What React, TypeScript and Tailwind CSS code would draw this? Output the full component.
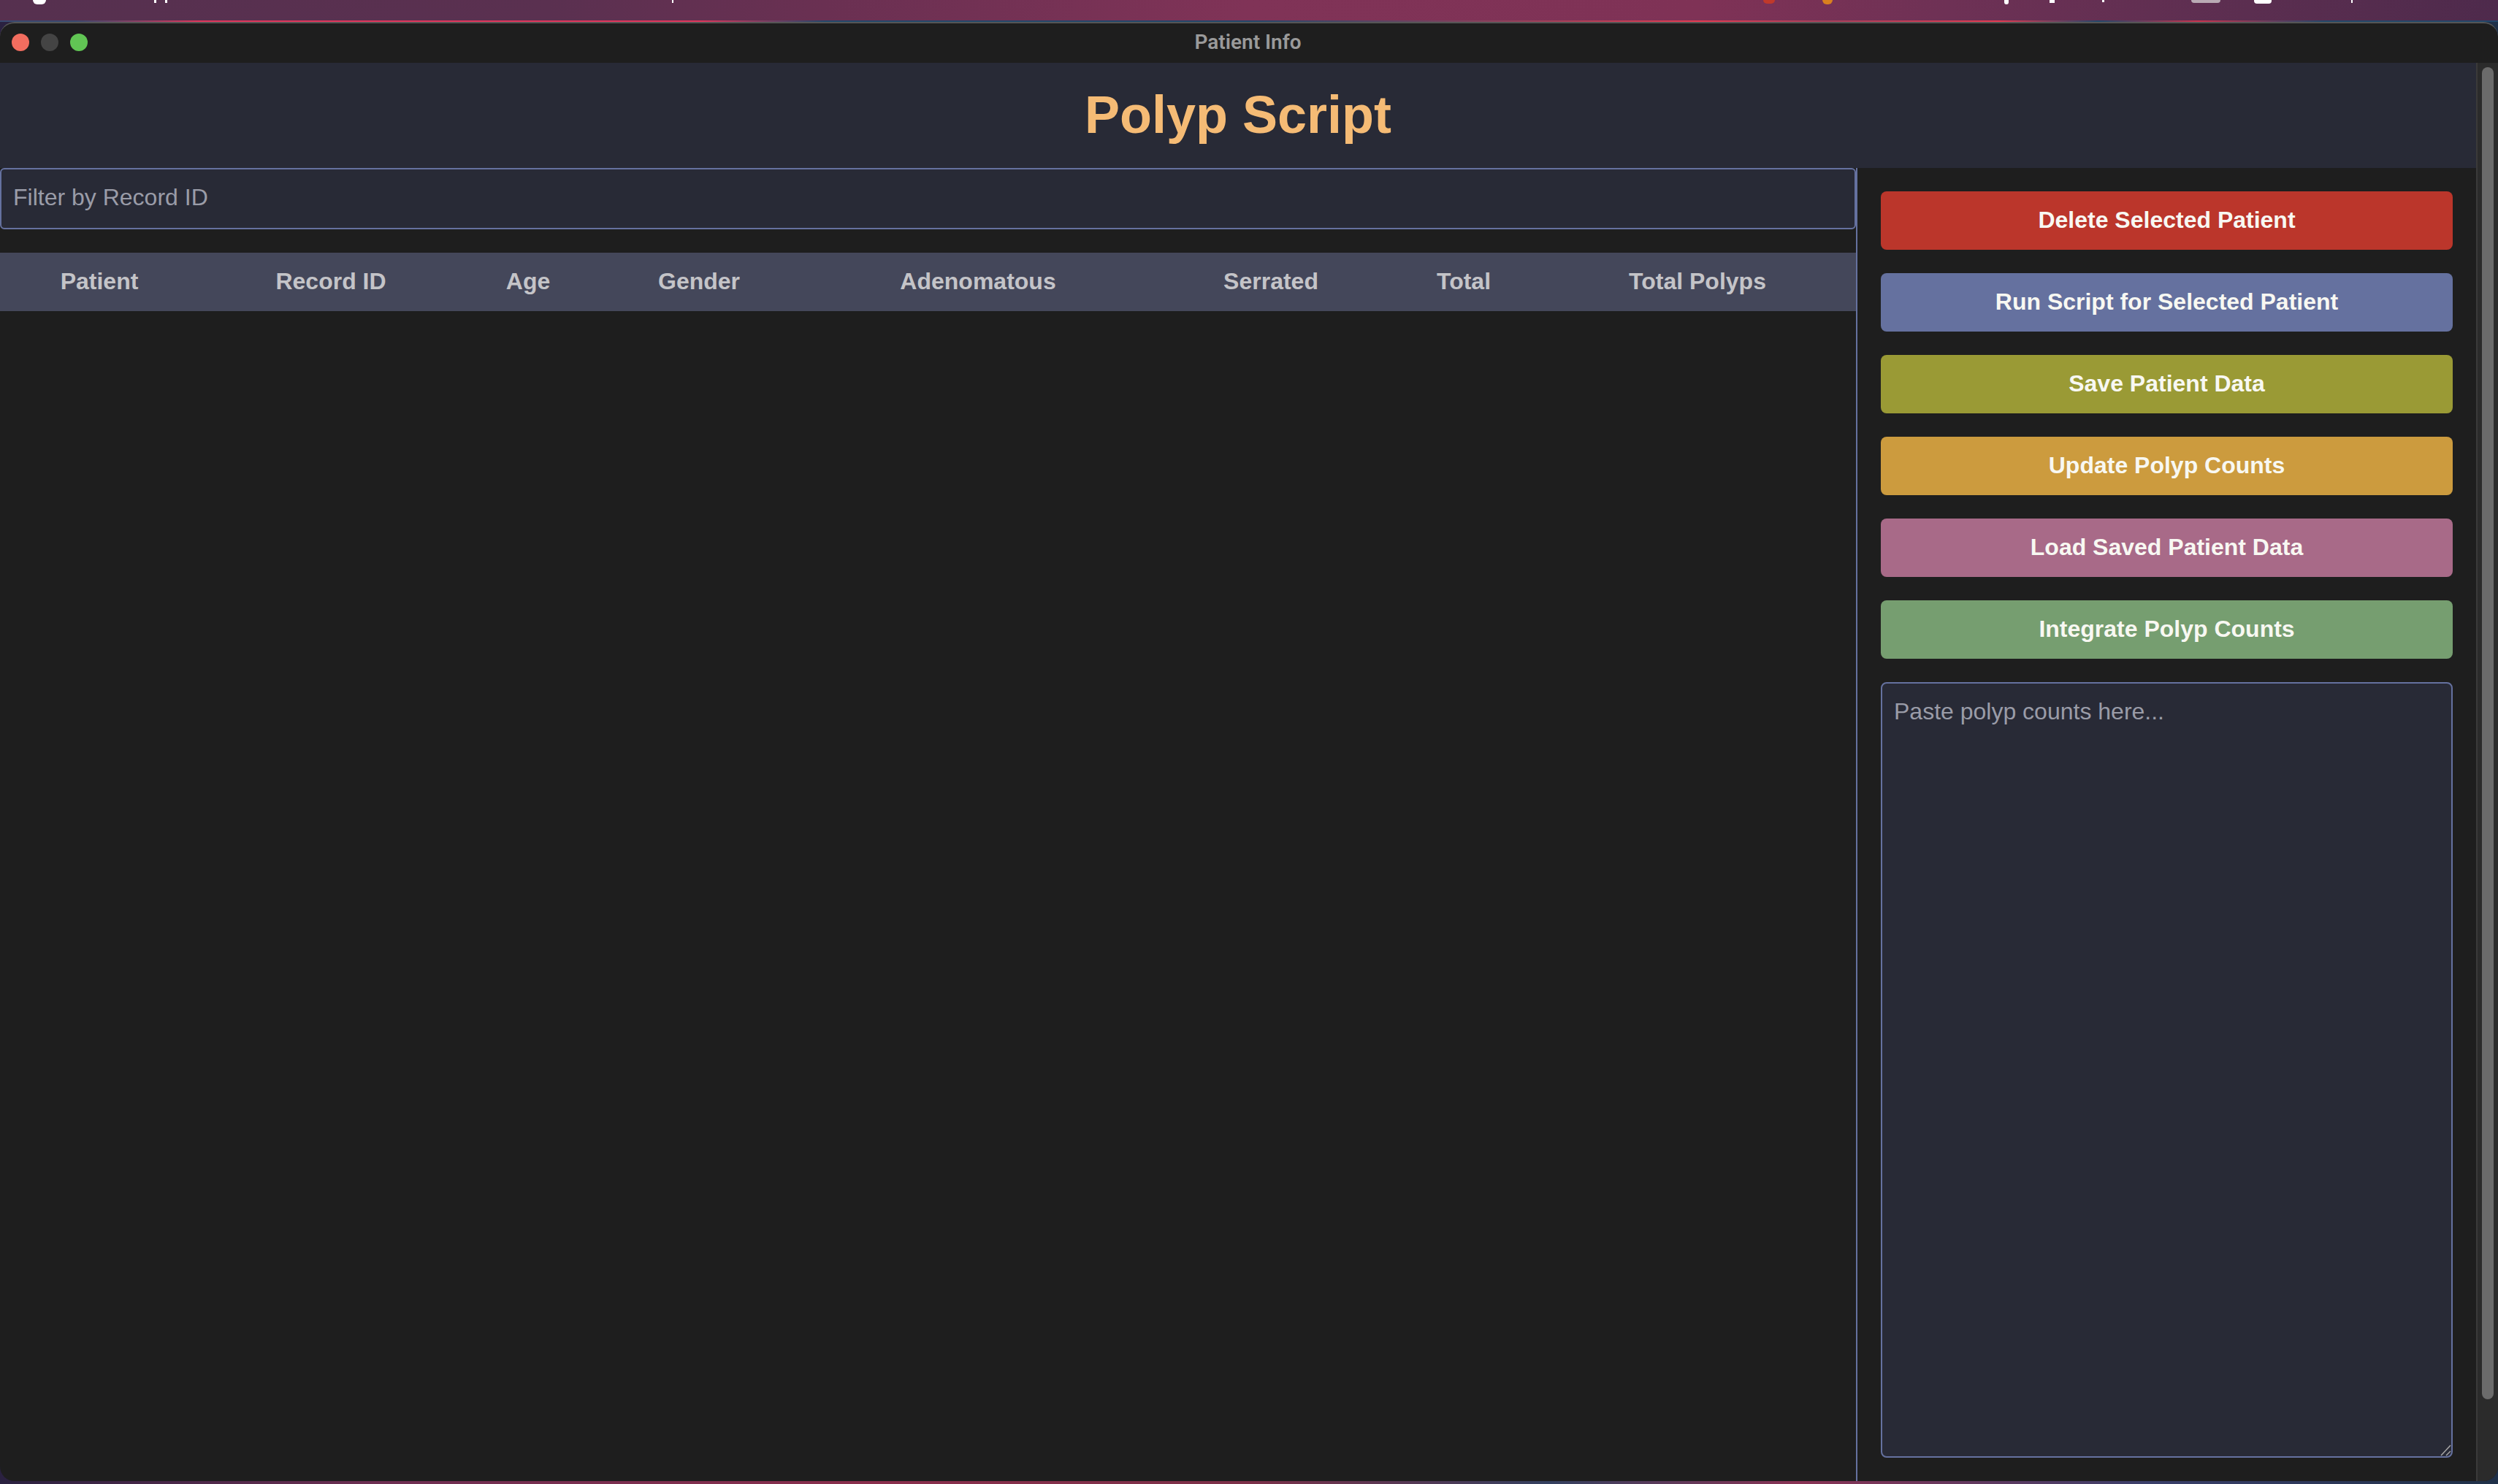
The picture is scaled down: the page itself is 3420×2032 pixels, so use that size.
import React from 'react';

const columns = [
    { label: 'Patient', width: 'w-[272px]' },
    { label: 'Record ID', width: 'w-[362px]' },
    { label: 'Age', width: 'w-[178px]' },
    { label: 'Gender', width: 'w-[290px]' },
    { label: 'Adenomatous', width: 'w-[474px]' },
    { label: 'Serrated', width: 'w-[328px]' },
    { label: 'Total', width: 'w-[200px]' },
    { label: 'Total Polyps', width: 'w-[437px] pl-[3px]' },
];

const actions = [
    { label: 'Delete Selected Patient', color: 'bg-[#bb362b]' },
    { label: 'Run Script for Selected Patient', color: 'bg-[#65719f]' },
    { label: 'Save Patient Data', color: 'bg-[#9a9a35]' },
    { label: 'Update Polyp Counts', color: 'bg-[#cc9b3e]' },
    { label: 'Load Saved Patient Data', color: 'bg-[#a86a88]' },
    { label: 'Integrate Polyp Counts', color: 'bg-[#769e70]' },
];

// bits of the macOS menu bar that stick out above the crop
const menuBits = [
    'left-[45px] w-[18px] h-[6px] rounded-b-full bg-white',
    'left-[211px] w-[3px] h-[4px] bg-white',
    'left-[226px] w-[3px] h-[4px] bg-white',
    'left-[920px] w-[2px] h-[4px] bg-white',
    'left-[2414px] w-[16px] h-[5px] rounded-b-full bg-[#c0392b]',
    'left-[2495px] w-[14px] h-[6px] rounded-b-full bg-[#d9801f]',
    'left-[2744px] w-[6px] h-[6px] rounded-b-full bg-white',
    'left-[2806px] w-[7px] h-[4px] bg-white',
    'left-[2878px] w-[3px] h-[3px] bg-white',
    'left-[3000px] w-[40px] h-[4px] rounded-b bg-[#b9aab4]',
    'left-[3086px] w-[24px] h-[5px] rounded-b bg-white',
    'left-[3219px] w-[2px] h-[4px] bg-white',
];

const App: React.FC = () => {
    return (
        <div className="relative flex flex-col w-[3420px] h-[2032px] overflow-hidden font-['Liberation_Sans',Arial,sans-serif] bg-[linear-gradient(90deg,#2a2140_0%,#6d2f52_15%,#8a2f4c_35%,#7c3048_50%,#33405f_62%,#8a3354_72%,#3a3f6a_86%,#1f3048_100%)]">
            <div className="relative h-[28px] shrink-0 bg-[linear-gradient(90deg,#56304f_0%,#5a3050_22%,#6a3052_33%,#803357_50%,#7f3256_68%,#6e3155_78%,#5b2e50_90%,#4e2a4c_100%)]">
                {menuBits.map((bit) => (
                    <span key={bit} className={`absolute top-0 ${bit}`} />
                ))}
            </div>
            <div className="h-[2px] shrink-0 bg-[linear-gradient(90deg,#3a4a70_0%,#3a4a70_3%,#e0375c_8%,#e0375c_28%,#24476a_33%,#24476a_50%,#6d4560_57%,#e63b52_68%,#a8405c_73%,#e63b52_80%,#24476a_84%,#c9344f_88%,#24476a_93%,#24476a_100%)]" />

            <div className="flex flex-col w-full h-[1998px] shrink-0 overflow-hidden rounded-[20px] bg-[#1e1e1e] border-t-2 border-[#555555]">
                <div className="grid grid-cols-[1fr_auto_1fr] items-center h-[54px] shrink-0 px-4 pb-[2px]">
                    <div className="flex items-center gap-4">
                        <span className="w-6 h-6 rounded-full bg-[#f26d5f]" />
                        <span className="w-6 h-6 rounded-full bg-[#444444]" />
                        <span className="w-6 h-6 rounded-full bg-[#61c554]" />
                    </div>
                    <div className="font-['Roboto',sans-serif] font-semibold text-[28px] text-[#9a9a9a] mr-[3px]">Patient Info</div>
                    <div />
                </div>

                <div className="flex flex-1 min-h-0">
                    <div className="flex flex-col flex-1 min-w-0">
                        <header className="flex items-center justify-center h-[144px] shrink-0 pb-[3px] bg-[#282a36]">
                            <h1 className="text-[72px] font-bold text-[#f5bb75]">Polyp Script</h1>
                        </header>

                        <div className="flex flex-1 min-h-0">
                            <div className="flex flex-col w-[2541px] shrink-0">
                                <input
                                    placeholder="Filter by Record ID"
                                    className="w-full h-[84px] shrink-0 px-4 pb-[3px] bg-[#282a36] border-2 border-[#65719f] rounded-[6px] text-[32px] text-[#f8f8f2] outline-none placeholder:text-[#9a9ca8]"
                                />
                                <table className="w-[2541px] mt-8 table-fixed border-collapse">
                                    <thead>
                                        <tr className="h-[80px] bg-[#44475a]">
                                            {columns.map((col) => (
                                                <th key={col.label} className={`${col.width} p-0 pb-[3px] text-center text-[32px] font-bold text-[#c4c4c8]`}>{col.label}</th>
                                            ))}
                                        </tr>
                                    </thead>
                                </table>
                            </div>

                            <aside className="flex flex-col flex-1 min-w-0 gap-8 p-8 border-l-2 border-[#65719f]">
                                {actions.map((action) => (
                                    <button key={action.label} className={`h-[80px] shrink-0 pb-[3px] rounded-[8px] text-[32px] font-bold text-[#f8f8f2] ${action.color}`}>
                                        {action.label}
                                    </button>
                                ))}
                                <div className="relative flex flex-1 min-h-0">
                                    <textarea
                                        placeholder="Paste polyp counts here..."
                                        className="w-full resize-none px-4 pt-[14px] pb-4 bg-[#282a36] border-2 border-[#65719f] rounded-[8px] text-[32px] text-[#f8f8f2] outline-none placeholder:text-[#9a9ca8]"
                                    />
                                    <svg className="absolute right-[2px] bottom-[2px] w-4 h-4" viewBox="0 0 16 16" fill="none" stroke="#a8a8a8" strokeWidth="1.5">
                                        <path d="M2 15 15 1" />
                                        <path d="M9 15 15 9" />
                                    </svg>
                                </div>
                            </aside>
                        </div>
                    </div>

                    <div className="w-[30px] shrink-0 pt-[6px] pl-[6px] bg-[#2b2b2b] border-l-2 border-[#3a3a3a]">
                        <div className="w-4 h-[1824px] rounded-full bg-[#6b6b6b]" />
                    </div>
                </div>
            </div>
        </div>
    );
};

export default App;
